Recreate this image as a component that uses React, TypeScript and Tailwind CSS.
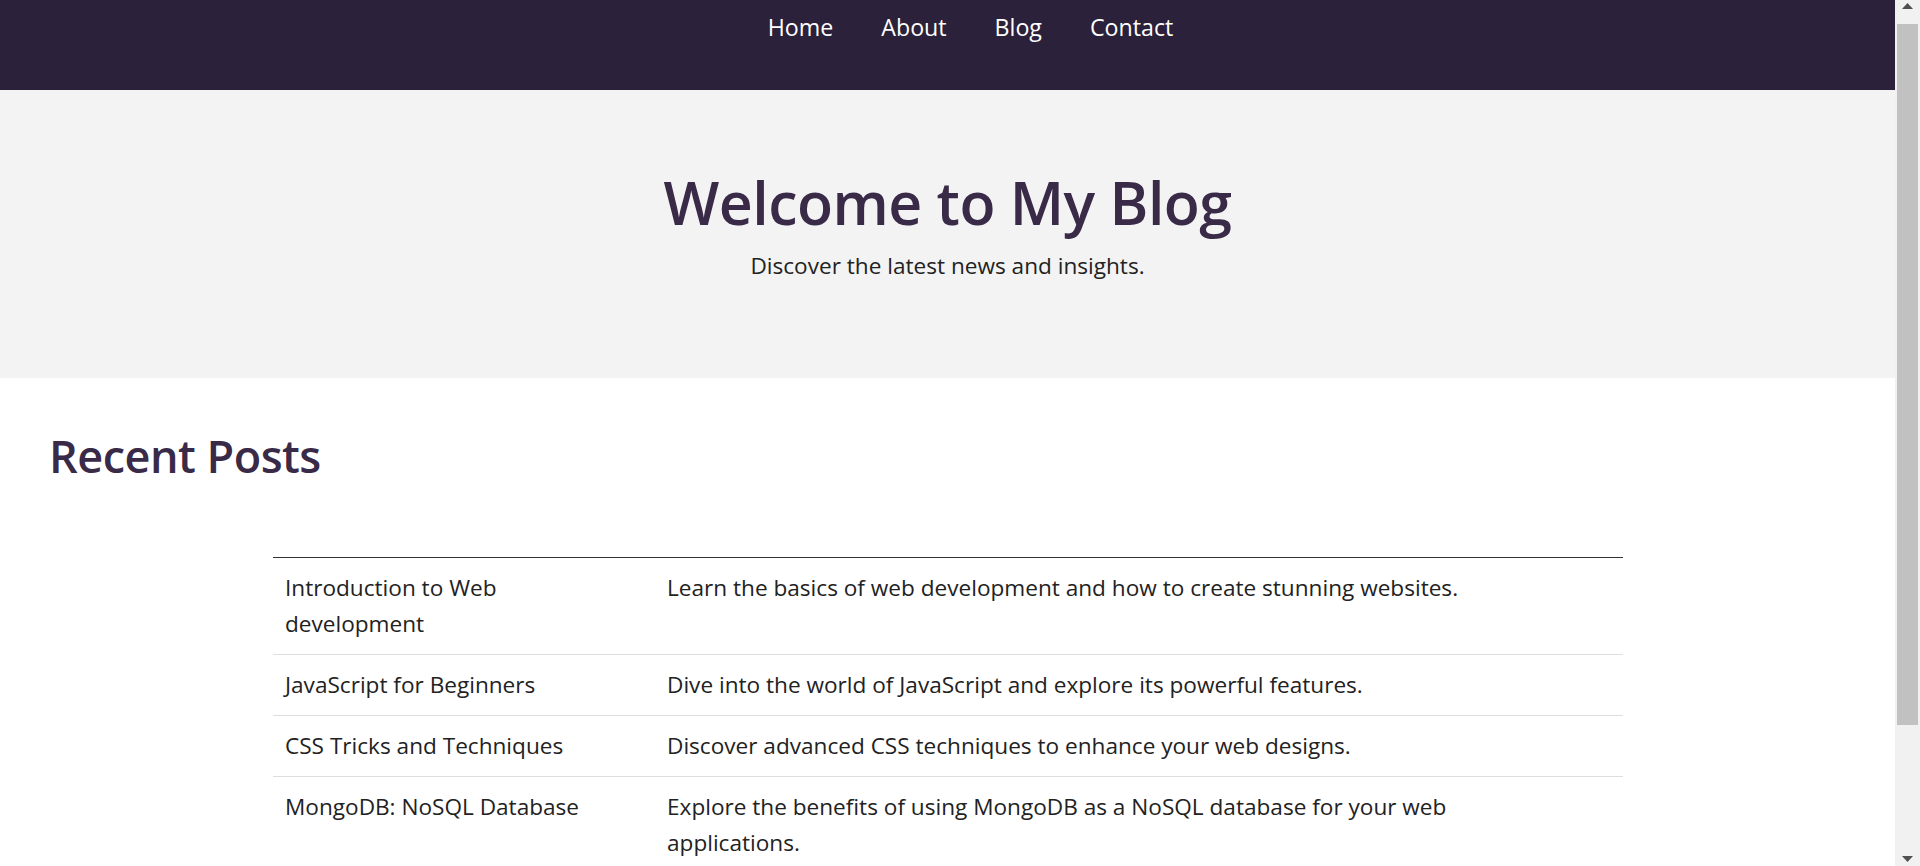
import React from "react";

const NAV = ["Home", "About", "Blog", "Contact"];

const POSTS = [
	{
		title: "Introduction to Web development",
		desc: "Learn the basics of web development and how to create stunning websites.",
	},
	{
		title: "JavaScript for Beginners",
		desc: "Dive into the world of JavaScript and explore its powerful features.",
	},
	{
		title: "CSS Tricks and Techniques",
		desc: "Discover advanced CSS techniques to enhance your web designs.",
	},
	{
		title: "MongoDB: NoSQL Database",
		desc: "Explore the benefits of using MongoDB as a NoSQL database for your web applications.",
	},
];

// browser scrollbar as it appears in the capture
function Scrollbar() {
	return (
		<aside className="sticky top-0 self-start h-[866px] w-[25px] shrink-0 bg-[#f1f1f1] flex flex-col">
			<div className="h-[22px] flex justify-center pt-[3px]">
				<svg width="11" height="6" viewBox="0 0 11 6">
					<polygon points="5.5,0 11,6 0,6" fill="#505050" />
				</svg>
			</div>
			<div className="mt-[2px] mx-[2px] h-[701px] bg-[#c1c1c1]" />
			<div className="flex-1" />
			<div className="h-[22px] flex justify-center items-end pb-[4px]">
				<svg width="11" height="6" viewBox="0 0 11 6">
					<polygon points="0,0 11,0 5.5,6" fill="#505050" />
				</svg>
			</div>
		</aside>
	);
}

export default function App() {
	return (
		<div className="flex bg-white text-[#222] font-['Open_Sans',sans-serif]">
			<div className="flex-1 min-w-0 min-h-[1700px]">
				<nav className="h-[90px] bg-[#2c213a]">
					<ul className="flex justify-center gap-[48px] pl-[46px] pt-[9px]">
						{NAV.map((n) => (
							<li key={n} className="text-[23.2px] leading-[36px] text-white">
								{n}
							</li>
						))}
					</ul>
				</nav>

				<header className="h-[288px] bg-[#f3f3f3] flex flex-col items-center pt-[74px]">
					<h1 className="text-[59px] leading-[76px] font-semibold text-[#392a48] tracking-[-0.5px]">
						Welcome to My Blog
					</h1>
					<p className="mt-[10px] text-[22.6px] leading-[32px] text-[#222]">
						Discover the latest news and insights.
					</p>
				</header>

				<main className="px-[49px] pt-[48px]">
					<h2 className="text-[45px] leading-[60px] font-semibold text-[#392a48] tracking-[-0.5px]">
						Recent Posts
					</h2>

					<table className="mt-[71px] ml-[224px] w-[1350px] border-collapse border-t border-[#333] text-[22.6px] leading-[36px]">
						<tbody>
							{POSTS.map((p, i) => (
								<tr
									key={i}
									className={i < POSTS.length - 1 ? "border-b border-[#dedede]" : ""}
								>
									<td className="w-[382px] pl-3 pr-6 py-3 align-top">{p.title}</td>
									<td className="pl-3 pr-[56px] py-3 align-top">{p.desc}</td>
								</tr>
							))}
						</tbody>
					</table>
				</main>
			</div>
			<Scrollbar />
		</div>
	);
}
